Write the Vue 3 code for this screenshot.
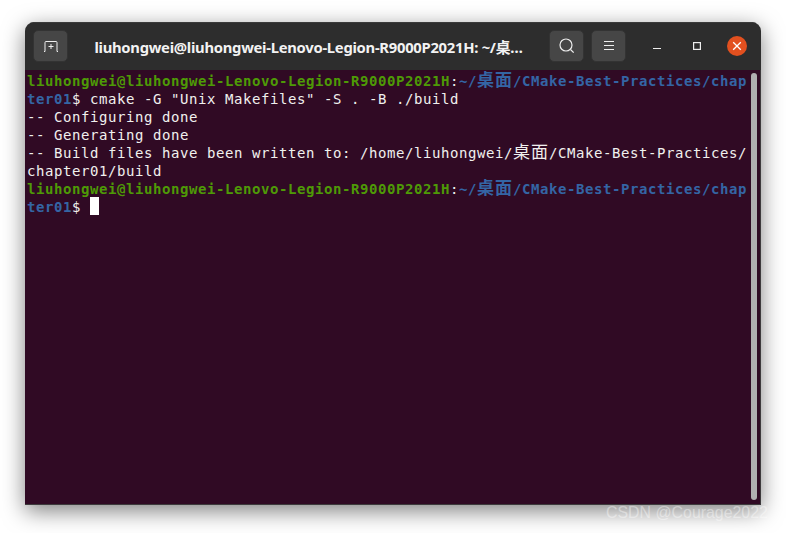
<script setup>
const green = 'liuhongwei@liuhongwei-Lenovo-Legion-R9000P2021H'
</script>

<template>
  <div class="page">
    <div class="window">
      <header class="bar">
        <button class="btn">
          <svg width="18" height="16" viewBox="0 0 18 16" fill="none" stroke="#eee" stroke-width="1">
            <path d="M2 13.500h1V4.500a1 1 0 0 1 1-1h10a1 1 0 0 1 1 1v9h1" />
            <path d="M9 6v5M6.500 8.500h5" />
          </svg>
        </button>
        <div class="title"><span class="title-text">liuhongwei@liuhongwei-Lenovo-Legion-R9000P2021H: ~/桌…</span></div>
        <button class="btn">
          <svg width="18" height="18" viewBox="0 0 18 18" fill="none" stroke="#eee" stroke-width="1.2">
            <circle cx="8" cy="8" r="6" />
            <path d="M12.500 12.500l3.200 3.200" />
          </svg>
        </button>
        <button class="btn menu">
          <svg width="12" height="10" viewBox="0 0 12 10" stroke="#eee" stroke-width="1">
            <path d="M1 .5h10M1 4.500h10M1 8.500h10" />
          </svg>
        </button>
        <div class="controls">
          <span class="ctl">
            <svg width="10" height="10" viewBox="0 0 10 10" stroke="#eee" stroke-width="1"><path d="M1 7.500h8" /></svg>
          </span>
          <span class="ctl">
            <svg width="10" height="10" viewBox="0 0 10 10" fill="none" stroke="#eee" stroke-width="1.2"><rect x="1.600" y="1.600" width="6.800" height="6.800" /></svg>
          </span>
          <span class="ctl close">
            <svg width="10" height="10" viewBox="0 0 10 10" stroke="#fff" stroke-width="1.300"><path d="M1.200 1.200l7.600 7.600M8.800 1.200l-7.600 7.600" /></svg>
          </span>
        </div>
      </header>
      <main class="term">
        <div class="row"><b class="g">{{ green }}</b>:<b class="b">~/<span class="cjk">桌面</span>/CMake-Best-Practices/chap</b></div>
        <div class="row"><b class="b">ter01</b>$ cmake -G "Unix Makefiles" -S . -B ./build</div>
        <div class="row">-- Configuring done</div>
        <div class="row">-- Generating done</div>
        <div class="row">-- Build files have been written to: /home/liuhongwei/<span class="cjk">桌面</span>/CMake-Best-Practices/</div>
        <div class="row">chapter01/build</div>
        <div class="row"><b class="g">{{ green }}</b>:<b class="b">~/<span class="cjk">桌面</span>/CMake-Best-Practices/chap</b></div>
        <div class="row"><b class="b">ter01</b>$ <span class="cursor"></span></div>
        <div class="scrollbar"></div>
      </main>
    </div>
    <div class="mark">CSDN @Courage2022</div>
  </div>
</template>

<style>
html, body { margin: 0; background: #fff; overflow: hidden; }
</style>

<style scoped>
.page {
  width: 786px;
  height: 533px;
  padding: 22px 25px 28px;
  box-sizing: border-box;
  position: relative;
  overflow: hidden;
  background: #fff;
}
.window {
  height: 483px;
  display: flex;
  flex-direction: column;
  border-radius: 9px 9px 0 0;
  overflow: hidden;
  box-shadow: 0 6px 22px rgba(0, 0, 0, 0.5);
  position: relative;
  z-index: 0;
}
.bar {
  height: 48px;
  flex: none;
  background: #2d2d2d;
  display: flex;
  align-items: center;
  padding: 0 14px 1px 8px;
  box-sizing: border-box;
  border-top: 1px solid #3a3a3a;
}
.btn {
  width: 35px;
  height: 32px;
  padding: 0;
  margin: 0;
  flex: none;
  border: 1px solid #333;
  border-radius: 5px;
  background: #464646;
  display: flex;
  align-items: center;
  justify-content: center;
}
.menu { margin-left: 7px; }
.title {
  flex: 1;
  text-align: center;
  overflow: hidden;
  white-space: nowrap;
}
.title-text {
  font: 700 14.8px "Noto Sans", "Noto Sans CJK SC", sans-serif;
  color: #f2f2f2;
  letter-spacing: -0.28px;
}
.controls {
  display: flex;
  align-items: center;
  gap: 20px;
  margin-left: 21px;
}
.ctl {
  width: 20px;
  height: 20px;
  border-radius: 50%;
  display: flex;
  align-items: center;
  justify-content: center;
}
.close { background: #e2501f; }
.term {
  flex: 1;
  background: #300a24;
  border: 1px solid #3d3a3c;
  border-width: 0 1px 1px 0;
  padding: 2px 0 0 2px;
  position: relative;
  font: 14px/18px "DejaVu Sans Mono", "Noto Sans CJK SC", monospace;
  letter-spacing: 0.57px;
  color: #f0f0ee;
}
.row {
  height: 18px;
  white-space: pre;
}
.g { color: #4e9a06; font-weight: 700; }
.b { color: #3465a4; font-weight: 700; }
.cjk {
  font-family: "Noto Sans CJK SC", sans-serif;
  font-size: 17px;
  line-height: 0;
  letter-spacing: 1px;
  font-weight: 400;
}
b .cjk { font-weight: 700; }
.cursor {
  display: inline-block;
  width: 9px;
  height: 18px;
  margin-top: -1px;
  background: #fff;
  vertical-align: top;
}
.scrollbar {
  position: absolute;
  top: 3px;
  right: 3px;
  width: 6px;
  bottom: 4px;
  background: #b0aeb0;
  border-radius: 3px;
}
.mark {
  position: absolute;
  left: 606px;
  top: 503px;
  font: 15.9px/20px "Liberation Sans", sans-serif;
  color: rgba(255, 255, 255, 0.4);
  white-space: nowrap;
  z-index: 2;
}
</style>
